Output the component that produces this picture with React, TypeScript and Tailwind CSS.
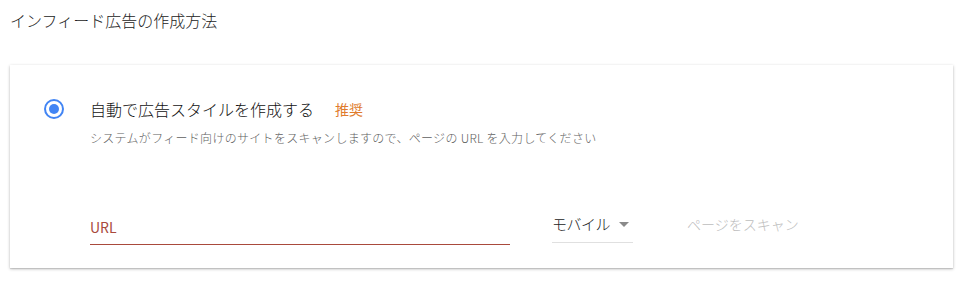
import React from 'react';

export default function App() {
    return (
        <div className="w-[963px] h-[284px] bg-white text-[#212121] font-['Noto_Sans_CJK_JP',sans-serif] font-light overflow-hidden">
            <h1 className="pl-[10px] pt-[9px] text-[16px] leading-[22px] text-[#222]">インフィード広告の作成方法</h1>

            <div className="ml-[10px] mt-[34px] w-[943px] h-[203px] bg-white shadow-[0_1px_3px_rgba(0,0,0,0.25),0_1px_1px_rgba(0,0,0,0.1)]">
                <div className="flex pl-[34px] pt-[33px]">
                    <div className="mt-[1px] w-[20px] h-[20px] rounded-full border-2 border-[#4285f4] flex items-center justify-center">
                        <div className="w-[10px] h-[10px] rounded-full bg-[#4285f4]" />
                    </div>
                    <div className="ml-[26px]">
                        <div className="flex items-center text-[16px] leading-[22px]">
                            <span className="text-[#111]">自動で広告スタイルを作成する</span>
                            <span className="ml-[21px] text-[14px] font-normal text-[#e07b2c]">推奨</span>
                        </div>
                        <p className="mt-[10px] text-[12px] leading-[16px] tracking-[0.3px] text-[#5f5f5f]">
                            システムがフィード向けのサイトをスキャンしますので、ページの URL を入力してください
                        </p>
                    </div>
                </div>

                <div className="flex items-start pl-[80px] mt-[68px]">
                    <div className="w-[420px] border-b border-[#a94a3c] pb-[6px]">
                        <span className="text-[14px] leading-[20px] font-normal text-[#a94a3c]">URL</span>
                    </div>
                    <div className="ml-[42px] w-[81px] border-b border-[#e0e0e0] pb-[8px] flex items-center">
                        <span className="text-[15px] leading-[20px] tracking-[-0.5px] text-[#222]">モバイル</span>
                        <svg className="ml-[9px]" width="10" height="5" viewBox="0 0 10 5">
                            <path d="M0 0 L10 0 L5 5 Z" fill="#8a8a8a" />
                        </svg>
                    </div>
                    <span className="ml-[54px] text-[14px] leading-[20px] text-[#bdbdbd]">ページをスキャン</span>
                </div>
            </div>
        </div>
    );
}
